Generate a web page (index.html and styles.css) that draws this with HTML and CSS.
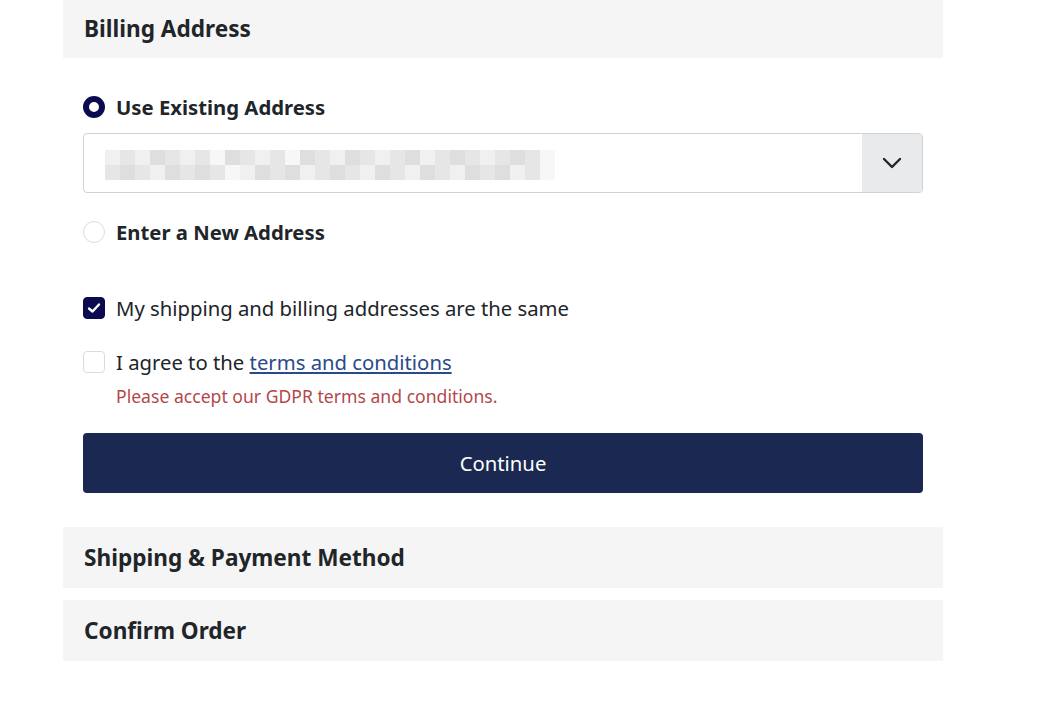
FILE: index.html
```html
<!DOCTYPE html>
<html>
<head>
  <title>Checkout</title>
  <meta charset="UTF-8">
  <link rel="stylesheet" href="styles.css">
</head>
<body>
  <main class="checkout">
    <section class="step step-open">
      <h2 class="step-title">Billing Address</h2>
      <div class="step-body">
        <label class="radio-row">
          <span class="radio radio-on"></span>
          <span class="radio-label">Use Existing Address</span>
        </label>

        <div class="select">
          <div class="select-value">
            <div class="blur-row">
              <span class="px s1"></span><span class="px s2"></span><span class="px s1"></span><span class="px s3"></span><span class="px s2"></span><span class="px s1"></span><span class="px s2"></span><span class="px s4"></span><span class="px s3"></span><span class="px s2"></span><span class="px s1"></span><span class="px s2"></span><span class="px s4"></span><span class="px s3"></span><span class="px s2"></span><span class="px s1"></span><span class="px s3"></span><span class="px s2"></span><span class="px s1"></span><span class="px s2"></span><span class="px s3"></span><span class="px s1"></span><span class="px s2"></span><span class="px s3"></span><span class="px s2"></span><span class="px s1"></span><span class="px s2"></span><span class="px s3"></span><span class="px s2"></span><span class="px s4"></span>
            </div>
            <div class="blur-row">
              <span class="px s2"></span><span class="px s3"></span><span class="px s2"></span><span class="px s1"></span><span class="px s3"></span><span class="px s2"></span><span class="px s3"></span><span class="px s2"></span><span class="px s4"></span><span class="px s1"></span><span class="px s3"></span><span class="px s2"></span><span class="px s3"></span><span class="px s1"></span><span class="px s2"></span><span class="px s3"></span><span class="px s2"></span><span class="px s1"></span><span class="px s3"></span><span class="px s2"></span><span class="px s1"></span><span class="px s3"></span><span class="px s2"></span><span class="px s1"></span><span class="px s3"></span><span class="px s2"></span><span class="px s3"></span><span class="px s1"></span><span class="px s2"></span><span class="px s4"></span>
            </div>
          </div>
          <div class="select-arrow">
            <svg width="20" height="12" viewBox="0 0 20 12"><path d="M2 2 L10 10 L18 2" fill="none" stroke="#212529" stroke-width="2.4" stroke-linecap="round" stroke-linejoin="round"/></svg>
          </div>
        </div>

        <label class="radio-row radio-new">
          <span class="radio"></span>
          <span class="radio-label">Enter a New Address</span>
        </label>

        <label class="check-row check-same">
          <span class="check check-on">
            <svg width="14" height="12" viewBox="0 0 14 12"><path d="M2 6.5 L5.5 9.5 L12 2.5" fill="none" stroke="#fff" stroke-width="2.4" stroke-linecap="round" stroke-linejoin="round"/></svg>
          </span>
          <span>My shipping and billing addresses are the same</span>
        </label>

        <label class="check-row check-terms">
          <span class="check"></span>
          <span>I agree to the <a href="#" class="terms-link">terms and conditions</a></span>
        </label>
        <p class="error">Please accept our GDPR terms and conditions.</p>

        <button class="btn-continue">Continue</button>
      </div>
    </section>

    <section class="step">
      <h2 class="step-title">Shipping &amp; Payment Method</h2>
    </section>

    <section class="step">
      <h2 class="step-title">Confirm Order</h2>
    </section>
  </main>
</body>
</html>
```

FILE: styles.css
```css
body {
  margin: 0;
  background: #fff;
  font-family: 'Noto Sans', sans-serif;
  color: #212529;
}

.checkout {
  width: 880px;
  margin-left: 63px;
}

.step {
  margin-bottom: 12px;
}

.step-title {
  margin: 0;
  background: #f5f5f5;
  font-size: 22.6px;
  font-weight: 700;
  height: 61px;
  line-height: 61px;
  padding: 0 21px;
}

.step-open .step-title {
  height: 58px;
  line-height: 57px;
}

.step-body {
  padding: 34px 20px 22px 20px;
}

.radio-row {
  display: flex;
  align-items: center;
  gap: 11px;
  height: 30px;
}

.radio {
  width: 22px;
  height: 22px;
  box-sizing: border-box;
  border-radius: 50%;
  border: 1px solid #dcdcdc;
  background: #fff;
}

.radio-on {
  border: 6px solid #0d0b4f;
}

.radio-label {
  font-size: 20.3px;
  font-weight: 700;
}

.select {
  display: flex;
  height: 60px;
  margin-top: 11px;
  border: 1px solid #cfd3d7;
  border-radius: 4px;
  box-sizing: border-box;
  overflow: hidden;
}

.select-value {
  flex: 1;
  padding: 16px 0 0 21px;
}

.blur-row {
  display: flex;
}

.px {
  width: 15px;
  height: 15px;
}

.s1 { background: #f0f0f0; }
.s2 { background: #e6e6e6; }
.s3 { background: #dedede; }
.s4 { background: #f7f7f7; }

.select-arrow {
  width: 60px;
  background: #e9eaec;
  display: flex;
  align-items: center;
  justify-content: center;
}

.radio-new {
  margin-top: 24px;
}

.check-row {
  display: flex;
  align-items: center;
  gap: 11px;
  font-size: 20.3px;
  height: 30px;
}

.check-same {
  margin-top: 46px;
}

.check-terms {
  margin-top: 24px;
}

.check {
  width: 22px;
  height: 22px;
  box-sizing: border-box;
  border-radius: 4px;
  border: 1px solid #dcdcdc;
  display: flex;
  align-items: center;
  justify-content: center;
}

.check-on {
  background: #0d0b4f;
  border-color: #0d0b4f;
}

.terms-link {
  color: #2a4a8a;
}

.error {
  margin: 7px 0 0 33px;
  color: #b3474b;
  font-size: 17.6px;
}

.btn-continue {
  display: block;
  width: 100%;
  height: 60px;
  margin-top: 25px;
  border: none;
  border-radius: 4px;
  background: #1b2852;
  color: #fff;
  font-family: 'Noto Sans', sans-serif;
  font-size: 20.3px;
}
```
